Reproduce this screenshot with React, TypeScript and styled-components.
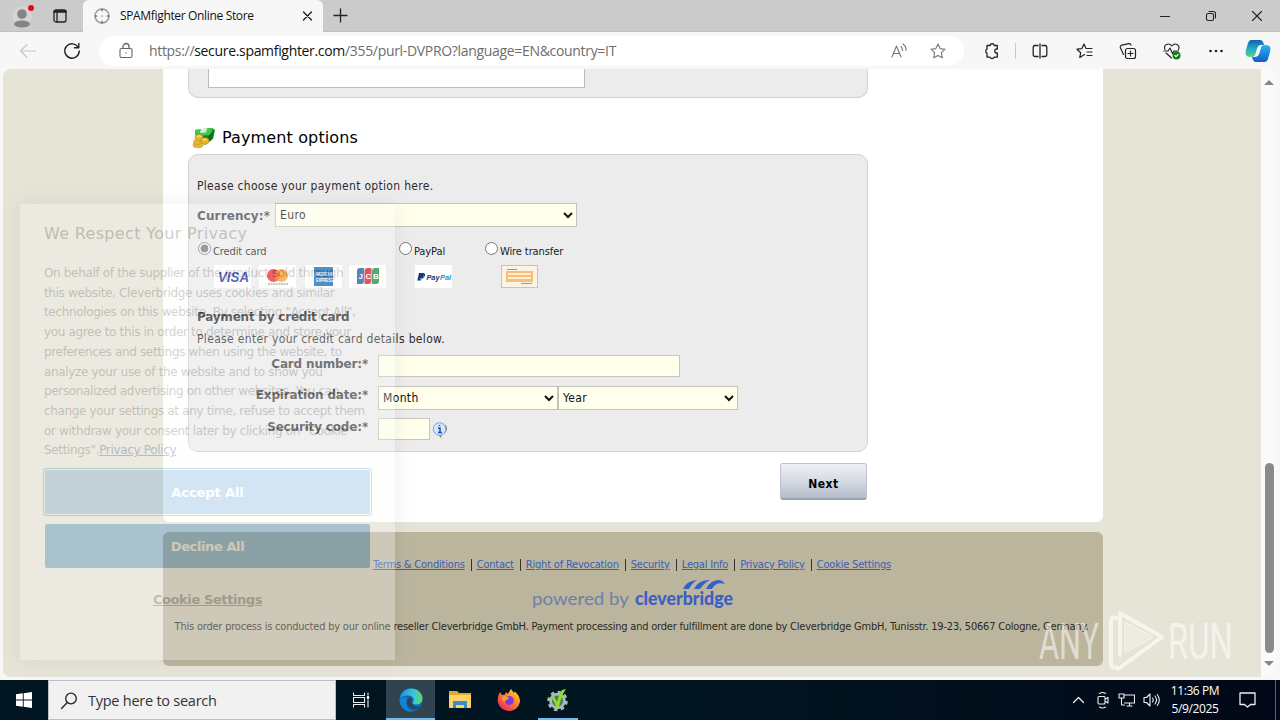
import React, { ReactNode } from 'react';
import styled, { createGlobalStyle } from 'styled-components';

const tahoma = '"DejaVu Sans Condensed", "DejaVu Sans", sans-serif';
const verdana = '"DejaVu Sans", sans-serif';
const segoe = '"Open Sans", "Noto Sans", sans-serif';

const GlobalStyle = createGlobalStyle`
    * {
        box-sizing: border-box;
    }
    body {
        margin: 0;
        overflow: hidden;
        font-family: ${tahoma};
    }
`;

const Screen = styled.div`
    position: relative;
    width: 1280px;
    height: 720px;
    display: flex;
    flex-direction: column;
    overflow: hidden;
    background-color: #f7f7f7;
`;

/* browser window */

const TabStrip = styled.div`
    height: 32px;
    flex: none;
    display: flex;
    align-items: center;
    background-color: #cbcbcb;
    border-bottom: 1px solid #c0c0c0;
`;

const TabTools = styled.div`
    width: 83px;
    height: 32px;
    padding-left: 12px;
    display: flex;
    align-items: center;
    gap: 19px;
`;

const Tab = styled.div`
    width: 240px;
    height: 33px;
    margin-top: 1px;
    padding: 0 10px 0 11px;
    display: flex;
    align-items: center;
    background-color: #f7f7f7;
    border-radius: 6px 6px 0 0;
`;

const TabTitle = styled.span`
    flex: 1;
    margin-left: 10px;
    font: 12px/20px ${segoe};
    letter-spacing: -0.34px;
    color: #111;
    white-space: nowrap;
`;

const NewTab = styled.div`
    margin-left: 10px;
    display: flex;
`;

const WindowButtons = styled.div`
    margin-left: auto;
    padding-right: 17px;
    display: flex;
    gap: 34px;
`;

const ToolBar = styled.div`
    height: 37px;
    flex: none;
    display: flex;
    align-items: center;
    padding-left: 19px;
`;

const AddressBar = styled.div`
    width: 865px;
    height: 30px;
    margin-left: 18px;
    padding: 0 18px 0 18px;
    display: flex;
    align-items: center;
    background-color: #fff;
    border-radius: 15px;
`;

const Url = styled.span`
    flex: 1;
    margin-left: 14px;
    font: 14px/20px ${segoe};
    letter-spacing: -0.32px;
    color: #6d6d6d;
    white-space: nowrap;

    b {
        font-weight: 400;
        color: #111;
    }
`;

const ToolIcons = styled.div`
    margin-left: 6px;
    display: flex;
    align-items: center;
`;

const ToolButton = styled.span`
    width: 44px;
    display: flex;
    justify-content: center;
`;

const Separator = styled.span`
    width: 1px;
    height: 16px;
    margin: 0 2px 0 1px;
    background-color: #c8c8c8;
`;

/* page */

const Viewport = styled.div`
    width: 1274px;
    height: 608px;
    flex: none;
    margin: 0 3px 3px;
    display: flex;
    overflow: hidden;
    border-radius: 8px;
    background-color: #e6e4d6;
`;

const PageBody = styled.div`
    flex: 1;
    padding-left: 160px;
`;

const ScrollBar = styled.div`
    width: 16px;
    padding: 10px 0 10px;
    display: flex;
    flex-direction: column;
    align-items: center;
    background-color: #fafafa;
`;

const Thumb = styled.div`
    width: 9px;
    height: 190px;
    margin: auto 0 8px;
    border-radius: 5px;
    background-color: #8a8a8a;
`;

const Sheet = styled.div`
    width: 940px;
    height: 453px;
    padding: 0 235px 0 25px;
    background-color: #fff;
    border-radius: 0 0 6px 6px;
`;

const Panel = styled.div`
    width: 680px;
    background-color: #ececec;
    border: 1px solid #d2d2d2;
    border-radius: 10px;
`;

const PanelTail = styled(Panel)`
    height: 29px;
    padding-left: 19px;
    border-top: 0;
    border-radius: 0 0 10px 10px;
`;

const TailInput = styled.div`
    width: 377px;
    height: 19px;
    background-color: #fff;
    border: 1px solid #bcbcbc;
    border-top: 0;
`;

const SectionTitle = styled.h2`
    height: 24px;
    margin: 28px 0 4px;
    padding-left: 4px;
    display: flex;
    align-items: center;
    gap: 5px;
    font: 16px/24px ${verdana};
    letter-spacing: 0.13px;
    color: #000;
`;

const PaymentPanel = styled(Panel)`
    height: 298px;
    padding: 20px 0 0 8px;
`;

const Text = styled.p<{ $top?: number; $spacing?: number }>`
    height: 20px;
    margin: ${({ $top }) => $top || 0}px 0 0;
    padding-top: 1px;
    font: 12px/20px ${tahoma};
    letter-spacing: ${({ $spacing }) => $spacing || 0}px;
    color: #2c2c2c;
    white-space: nowrap;
`;

const Subtitle = styled(Text)`
    font: 700 12px/20px ${verdana};
    letter-spacing: -0.22px;
`;

const Row = styled.div<{ $top: number; $height: number }>`
    height: ${({ $height }) => $height}px;
    margin-top: ${({ $top }) => $top}px;
    display: flex;
    align-items: center;
`;

const Label = styled.label`
    width: 78px;
    padding-top: 1px;
    font: 700 12px/16px ${verdana};
    letter-spacing: 0.12px;
    color: #444;
    white-space: nowrap;
`;

const FieldLabel = styled(Label)`
    width: 171px;
    align-self: flex-start;
    margin-right: 10px;
    letter-spacing: -0.17px;
    text-align: right;
`;

const Select = styled.select<{ $width: number }>`
    width: ${({ $width }) => $width}px;
    height: 24px;
    padding: 0 0 0 -1px;
    font: 12px ${tahoma};
    letter-spacing: 0.36px;
    color: #111;
    background-color: #ffffec;
    border: 1px solid #c3c3ba;
    border-radius: 0;
`;

const Input = styled.input<{ $width: number }>`
    width: ${({ $width }) => $width}px;
    height: 22px;
    background-color: #ffffec;
    border: 1px solid #c6c6bd;
`;

const Option = styled.label<{ $width: number }>`
    width: ${({ $width }) => $width}px;
    display: flex;
    align-items: center;
    gap: 2px;
    font: 11px/20px ${tahoma};
    letter-spacing: -0.1px;
    color: #222;
    white-space: nowrap;

    input {
        width: 13px;
        height: 13px;
        margin: 0 0 1px 1px;
        accent-color: #767676;
    }

    span {
        padding-top: 5px;
    }
`;

const Badge = styled.div<{ $left: number }>`
    width: 37px;
    height: 23px;
    margin-left: ${({ $left }) => $left}px;
    display: flex;
    background-color: #fff;
`;

const NextButton = styled.button`
    display: block;
    width: 87px;
    height: 37px;
    margin: 11px 0 0 592px;
    padding: 5px 0 0;
    font: 700 12px ${tahoma};
    letter-spacing: 0.5px;
    color: #000;
    border: 1px solid #bcc3cd;
    border-bottom: 2px solid #9ba2ae;
    border-radius: 3px;
    background: linear-gradient(#f0f1f5, #d5d9e2 50%, #b5bdca);
`;

const Footer = styled.div`
    width: 940px;
    height: 134px;
    margin-top: 10px;
    padding-top: 25px;
    display: flex;
    flex-direction: column;
    align-items: center;
    background-color: #bbb59e;
    border-radius: 6px;
`;

const FooterLinks = styled.div`
    height: 16px;
    padding-right: 2px;
    display: flex;
    align-items: center;
    font: 11px/16px ${tahoma};
    letter-spacing: -0.2px;
    white-space: nowrap;

    a {
        color: #3a5db5;
        text-decoration: underline;
    }

    a + a {
        margin-left: 6px;
        padding-left: 5px;
        border-left: 1px solid #333;
        line-height: 12px;
    }
`;

const FooterNote = styled.div`
    margin-top: 8px;
    padding-right: 3px;
    font: 11px/16px ${tahoma};
    letter-spacing: -0.207px;
    color: #2b2922;
    white-space: nowrap;
`;

/* consent dialog, caught half way through its fade */

const Consent = styled.div`
    position: absolute;
    left: 20px;
    top: 204px;
    width: 375px;
    height: 456px;
    padding: 18px 24px;
    display: flex;
    flex-direction: column;
    align-items: flex-start;
    background-color: #fdfcfb;
    box-shadow: 0 0 16px rgba(0, 0, 0, 0.22);
    opacity: 0.27;
`;

const ConsentTitle = styled.div`
    font: 16px/24px ${verdana};
    letter-spacing: 0.33px;
    color: #505050;
    white-space: nowrap;
`;

const ConsentText = styled.p`
    margin: 18px 0 0;
    font: 12px/19.7px ${verdana};
    letter-spacing: -0.34px;
    color: #606060;
    white-space: nowrap;

    a {
        color: #22479d;
        text-decoration: underline;
    }
`;

const ConsentButton = styled.div<{ $accept?: boolean }>`
    width: 325px;
    height: 44px;
    margin: ${({ $accept }) => ($accept ? '9px' : '10px')} 0 0 1px;
    display: flex;
    align-items: center;
    justify-content: center;
    font: 700 13px ${verdana};
    letter-spacing: ${({ $accept }) => ($accept ? '-0.1px' : '-0.4px')};
    color: #fff;
    border-radius: 2px;
    background-color: ${({ $accept }) => ($accept ? '#5fa0d6' : '#0a6cbb')};
    box-shadow: ${({ $accept }) => ($accept ? '0 0 0 1px #fff, 0 0 0 2px #4585b5' : 'none')};
`;

const ConsentLink = styled.a`
    align-self: center;
    margin-top: 22px;
    font: 700 13px/20px ${verdana};
    letter-spacing: -0.4px;
    color: #555;
    text-decoration: underline;
`;

const Watermark = styled.svg`
    position: absolute;
    left: 1034px;
    top: 606px;
`;

/* taskbar */

const TaskBar = styled.div`
    height: 40px;
    flex: none;
    display: flex;
    align-items: center;
    background: linear-gradient(90deg, #011620, #011520 55%, #020817);
`;

const Tile = styled.div<{ $width?: number; $active?: boolean; $running?: boolean }>`
    width: ${({ $width }) => $width || 49}px;
    height: 40px;
    display: flex;
    align-items: center;
    justify-content: center;
    background-color: ${({ $active }) => ($active ? '#30434e' : 'transparent')};
    box-shadow: ${({ $active, $running }) => ($active || $running ? 'inset 0 -2px #76b9ed' : 'none')};
`;

const RunningTile = styled(Tile)`
    margin-left: 5px;
`;

const SearchBox = styled.div`
    width: 288px;
    height: 40px;
    padding: 1px 0 0 11px;
    display: flex;
    align-items: center;
    gap: 11px;
    background-color: #f1f1f1;
    border: 1px solid #bdbdc6;
    font: 14.5px/20px ${segoe};
    letter-spacing: -0.25px;
    color: #333;
`;

const Tray = styled.div`
    margin-left: auto;
    display: flex;
    align-items: center;
    gap: 8px;
`;

const Clock = styled.div`
    width: 60px;
    margin: 0 6px 0 -3px;
    padding-bottom: 1px;
    font: 12px/18px ${segoe};
    letter-spacing: -0.4px;
    color: #fff;
    text-align: center;
    white-space: nowrap;
`;

const DesktopEdge = styled.div`
    width: 5px;
    height: 40px;
    margin-left: 11px;
    border-left: 1px solid #5a6070;
`;

function Icon({ w, h, color = '#222', children }: {
    w: number,
    h: number,
    color?: string,
    children: ReactNode
}) {
  return (
    <svg width={w} height={h} viewBox={`0 0 ${w} ${h}`} fill="none" stroke={color} strokeWidth="1.1" strokeLinecap="round" strokeLinejoin="round">
      {children}
    </svg>
  );
}

const Reload = styled.span`
    display: flex;
    margin-left: 26px;
`;

const Favorite = styled.span`
    display: flex;
    margin-left: 22px;
`;

const STAR = 'M8 1 10.1 5.6 15 6.2 11.4 9.7 12.3 14.8 8 12.4 3.7 14.8 4.6 9.7 1 6.2 5.9 5.6z';

function Tabs() {
  return (
    <TabStrip>
      <TabTools>
        <Icon w={22} h={26}>
          <circle cx="10" cy="13" r="10" fill="#d6d3d2" stroke="none" />
          <circle cx="10" cy="11" r="4.8" fill="#858383" stroke="none" />
          <path d="M2 21.500c0-5.500 16-5.500 16 0-2 4-14 4-16 0z" fill="#858383" stroke="none" />
          <circle cx="19" cy="5" r="3" fill="#e00b1c" stroke="none" />
        </Icon>
        <Icon w={14} h={14}>
          <rect x="1" y="1" width="12" height="12" rx="2" strokeWidth="1.3" />
          <path d="M1.500 2.500h11" strokeWidth="2.500" />
          <path d="M4 3v10" strokeWidth="1.300" />
        </Icon>
      </TabTools>
      <Tab>
        <Icon w={16} h={16} color="#999">
          <circle cx="8" cy="8" r="7" strokeWidth="1.5" />
          <path d="M8 1v2M8 13v2M1 8h2M13 8h2M7.800 8h.4" stroke="#555" />
        </Icon>
        <TabTitle>SPAMfighter Online Store</TabTitle>
        <Icon w={11} h={10}><path d="M1.5 1l8 8M9.500 1l-8 8" strokeWidth="1.4" /></Icon>
      </Tab>
      <NewTab>
        <Icon w={15} h={15}><path d="M7.500 1v13M1 7.500h13" strokeWidth="1.300" /></Icon>
      </NewTab>
      <WindowButtons>
        <Icon w={12} h={12}><path d="M1.500 6.500h9" /></Icon>
        <Icon w={12} h={12}>
          <rect x="1.500" y="3.500" width="7" height="7" rx="1.500" />
          <path d="M4 1.500h4.500a2 2 0 0 1 2 2V8" />
        </Icon>
        <Icon w={12} h={12}><path d="M1.500 1.500l9 9M10.500 1.500l-9 9" /></Icon>
      </WindowButtons>
    </TabStrip>
  );
}

function Navigation() {
  return (
    <ToolBar>
      <Icon w={18} h={16} color="#c6c6c6"><path d="M16.500 8H1.500M8 1.500 1.500 8 8 14.500" /></Icon>
      <Reload>
        <Icon w={18} h={18}><path d="M15.300 5.500A7.200 7.200 0 1 0 16.200 9M15.800 1.500v4.300h-4.300" strokeWidth="1.400" /></Icon>
      </Reload>
      <AddressBar>
        <Icon w={18} h={18} color="#666">
          <rect x="3" y="6.500" width="12" height="9" rx="1.500" />
          <path d="M6 6.500V4.500a3 3 0 0 1 6 0v2M9 11v.1" strokeWidth="1.300" />
        </Icon>
        <Url>https://<b>secure.spamfighter.com</b>/355/purl-DVPRO?language=EN&amp;country=IT</Url>
        <Icon w={18} h={16} color="#777">
          <path d="M2 14 6.500 3 11 14M3.600 10.500h5.800M11 3.500q1.500 1.500 1.500 4M13 1q3.500 2.500 3 6.500" />
        </Icon>
        <Favorite><Icon w={16} h={16} color="#777"><path d={STAR} /></Icon></Favorite>
      </AddressBar>
      <ToolIcons>
        <ToolButton>
          <Icon w={18} h={18}>
            <path d="M4 3.500h3a2.200 2.200 0 0 1 4.300 0h3v3.600a2 2 0 1 0 0 3.800v4.300h-3.200a2.200 2.200 0 0 1-4 0H4v-4a2.200 2.200 0 0 1 0-4z" strokeWidth="1.300" />
          </Icon>
        </ToolButton>
        <Separator />
        <ToolButton>
          <Icon w={16} h={16}>
            <path d="M6 2.500H3A1.800 1.800 0 0 0 1.200 4.300v7.400A1.800 1.800 0 0 0 3 13.500h3M10 2.500h3a1.800 1.800 0 0 1 1.800 1.800v7.400a1.800 1.800 0 0 1-1.800 1.800h-3M8 1v14" strokeWidth="1.300" />
          </Icon>
        </ToolButton>
        <ToolButton>
          <Icon w={17} h={16}>
            <path d="M8.500 11.500 3.800 14.500 4.700 9.700 1 6.200 5.900 5.600 8 1 10 5.500M11 5.500h5M11 9h5M11 12.500h5" strokeWidth="1.200" />
          </Icon>
        </ToolButton>
        <ToolButton>
          <Icon w={18} h={18}>
            <rect x="6.500" y="6.500" width="10" height="10" rx="2" strokeWidth="1.200" />
            <path d="M11.500 9v5M9 11.500h5M4.500 12.500 1.300 5.500a2 2 0 0 1 1.500-2.400l7-1.500a2 2 0 0 1 2.200 1.500" strokeWidth="1.200" />
          </Icon>
        </ToolButton>
        <ToolButton>
          <Icon w={18} h={18}>
            <path d="M2 7.500C0 3 5.500 0 8.800 4c3.200-4 8.700-1 6.700 3.500M1 9h4l2-3 2.500 5.500L11 9h4.500M3 11l5.500 5" />
            <circle cx="13.500" cy="13.500" r="4" fill="#167c19" stroke="none" />
            <path d="M11.800 13.500l1.200 1.200 2.200-2.200" stroke="#fff" />
          </Icon>
        </ToolButton>
        <ToolButton>
          <Icon w={16} h={4}>
            <g fill="#222" stroke="none"><circle cx="2.500" cy="2" r="1.300" /><circle cx="8" cy="2" r="1.300" /><circle cx="13.500" cy="2" r="1.300" /></g>
          </Icon>
        </ToolButton>
        <svg width="40" height="24" viewBox="-7 0 40 24">
          <defs>
            <linearGradient id="copilotA" x1="0" y1="0" x2="0" y2="1">
              <stop offset="0" stopColor="#1460ae" />
              <stop offset=".5" stopColor="#20a9c7" />
              <stop offset="1" stopColor="#5cd28a" />
            </linearGradient>
            <linearGradient id="copilotB" x1="0" y1="0" x2="0" y2="1">
              <stop offset="0" stopColor="#27b8ee" />
              <stop offset="1" stopColor="#1559d2" />
            </linearGradient>
          </defs>
          <path d="M6 1h9q3 0 4 5h-3q-3 0-4 4l-2 6q-1 2-3 2H5q-6 0-4-7l2-7q1-3 3-3z" fill="url(#copilotA)" />
          <path d="M20 23h-9q-3 0-4-5h3q3 0 4-4l2-6q1-2 3-2h2q6 0 4 7l-2 7q-1 3-3 3z" fill="url(#copilotB)" />
          <path d="M10.500 17l2-7q1-3.500 4-3.500l-2 7q-1 3.500-4 3.500z" fill="#fff" />
        </svg>
      </ToolIcons>
    </ToolBar>
  );
}

function MoneyIcon() {
  return (
    <svg width="25" height="22" viewBox="0 0 25 22">
      <path d="M3 3 20 1l3 2-2 9-8 6-9-6z" fill="#168b2b" />
      <path d="M3 3 21 1l-3 7-13 1z" fill="#3dc94c" />
      <path d="M9 2l6-.5-1 4-6 .5z" fill="#d7f0d5" />
      <path d="M17 8l5-4-2 8-6 5z" fill="#0f6e22" />
      <g fill="#e8b52c" stroke="#b98a1c" strokeWidth=".5">
        <ellipse cx="6" cy="18" rx="5" ry="2.800" />
        <ellipse cx="5.500" cy="15" rx="4" ry="2.500" />
        <ellipse cx="7" cy="10.500" rx="4" ry="3" />
        <ellipse cx="13" cy="14" rx="4" ry="3.200" />
      </g>
      <path d="M5 9.500q2-1.500 4 0M10.500 13q2-1.500 4 0" stroke="#fff1a0" fill="none" />
    </svg>
  );
}

function CardLogos() {
  return (
    <Row $top={6} $height={23}>
      <Badge $left={17}>
        <svg width="37" height="23">
          <text x="4" y="17" fontFamily="Liberation Sans" fontSize="14" fontWeight="700" fontStyle="italic" fill="#2330a8" textLength="31" lengthAdjust="spacingAndGlyphs">VISA</text>
        </svg>
      </Badge>
      <Badge $left={8}>
        <svg width="37" height="23">
          <circle cx="14.500" cy="10.500" r="6.500" fill="#ea2a2e" />
          <circle cx="22.500" cy="10.500" r="6.500" fill="#f59e2c" />
          <path d="M18.500 5.400a6.500 6.500 0 0 1 0 10.200 6.500 6.500 0 0 1 0-10.200z" fill="#f26522" />
          <path d="M9 19h20" stroke="#666" strokeDasharray="2 .6" />
        </svg>
      </Badge>
      <Badge $left={9}>
        <svg width="37" height="23">
          <rect x="9" y="2" width="19" height="19" fill="#0d66b4" />
          <g fontFamily="Liberation Sans" fontSize="5" fontWeight="700" fill="#fff">
            <text x="10" y="11" textLength="17" lengthAdjust="spacingAndGlyphs">AMERICAN</text>
            <text x="11" y="17" textLength="17" lengthAdjust="spacingAndGlyphs">EXPRESS</text>
          </g>
        </svg>
      </Badge>
      <Badge $left={7}>
        <svg width="37" height="23">
          <path d="M11 3h4v13q0 3-3 3H8V6q0-3 3-3z" fill="#1858a5" />
          <path d="M18.500 3h4v13q0 3-3 3h-4V6q0-3 3-3z" fill="#d0182e" />
          <path d="M26 3h4v13q0 3-3 3h-4V6q0-3 3-3z" fill="#158c3a" />
          <g fontFamily="Liberation Sans" fontSize="8" fontWeight="700" fill="#fff">
            <text x="9.500" y="14">J</text><text x="16.500" y="14">C</text><text x="24" y="14">B</text>
          </g>
        </svg>
      </Badge>
      <Badge $left={29}>
        <svg width="37" height="23">
          <path d="M4 8h4q2.500 0 2 2.500T7 13H5.500L5 15.500H2.300z" fill="#1b3475" />
          <path d="M8.500 10q.7 4-3 4l-.5 2" stroke="#1a86c9" fill="none" />
          <g fontFamily="Liberation Sans" fontSize="8" fontWeight="700" fontStyle="italic">
            <text x="11.500" y="15" fill="#1b2f6b" textLength="13" lengthAdjust="spacingAndGlyphs">Pay</text>
            <text x="25" y="15" fill="#1b94d2" textLength="11" lengthAdjust="spacingAndGlyphs">Pal</text>
          </g>
        </svg>
      </Badge>
      <Badge $left={49}>
        <svg width="37" height="23">
          <rect x=".5" y=".5" width="36" height="22" fill="#fbf3e6" stroke="#c9c4b8" />
          <path d="M6 4.500h10M20 18.500h11" stroke="#bd8f83" />
          <path d="M5 6h27v11H5z" fill="#f8bd78" />
          <path d="M7 8h23v2H7zM7 12h23v2H7z" fill="#fff0d8" />
        </svg>
      </Badge>
    </Row>
  );
}

function PaymentForm() {
  return (
    <PaymentPanel>
      <Text $spacing={0.3}>Please choose your payment option here.</Text>
      <Row $top={8} $height={24}>
        <Label>Currency:*</Label>
        <Select $width={302}><option>Euro</option></Select>
      </Row>
      <Row $top={12} $height={20}>
        <Option $width={201}><input type="radio" name="payment" defaultChecked /><span>Credit card</span></Option>
        <Option $width={86}><input type="radio" name="payment" /><span>PayPal</span></Option>
        <Option $width={90}><input type="radio" name="payment" /><span>Wire transfer</span></Option>
      </Row>
      <CardLogos />
      <Subtitle $top={18}>Payment by credit card</Subtitle>
      <Text $top={2} $spacing={0.33}>Please enter your credit card details below.</Text>
      <Row $top={7} $height={22}>
        <FieldLabel>Card number:*</FieldLabel>
        <Input $width={302} />
      </Row>
      <Row $top={9} $height={24}>
        <FieldLabel>Expiration date:*</FieldLabel>
        <Select $width={180}><option>Month</option></Select>
        <Select $width={180}><option>Year</option></Select>
      </Row>
      <Row $top={8} $height={22}>
        <FieldLabel>Security code:*</FieldLabel>
        <Input $width={52} />
        <svg width="19" height="18" viewBox="-1 -1 19 18">
          <path d="M14 3.500q4 4 0 8.500l-3 1-1 4-3-3.500" fill="#77798a" />
          <circle cx="8.500" cy="8" r="6.300" fill="#d3e6fb" stroke="#8ba3c9" />
          <path d="M7 7h2v4.500M7 11.500h4M8.500 4v1" stroke="#1d4fb0" strokeWidth="1.500" fill="none" />
        </svg>
      </Row>
    </PaymentPanel>
  );
}

const links = ['Terms & Conditions', 'Contact', 'Right of Revocation', 'Security', 'Legal Info', 'Privacy Policy', 'Cookie Settings'];

function PageFooter() {
  return (
    <Footer>
      <FooterLinks>
        {links.map((link) => <a key={link}>{link}</a>)}
      </FooterLinks>
      <svg width="204" height="38" viewBox="0 0 204 38" fontFamily="Lato">
        <text x="1" y="32" fontSize="18" fontWeight="400" fill="#6e7fa9" textLength="97" lengthAdjust="spacingAndGlyphs">powered by</text>
        <text x="104" y="32" fontSize="18" fontWeight="900" fill="#3c5fc2" textLength="98" lengthAdjust="spacingAndGlyphs">cleverbridge</text>
        <g fill="#3860cc">
          <path d="M152 16q3-8 14-9-5 3-8 9z" />
          <path d="M163 16q4-9 16-9-6 3-10 9z" />
          <path d="M175 16q4-9 14-9 3 1 5 4-9-3-13 5z" />
        </g>
      </svg>
      <FooterNote>
        This order process is conducted by our online reseller Cleverbridge GmbH. Payment processing and order fulfillment are done by Cleverbridge GmbH, Tunisstr. 19-23, 50667 Cologne, Germany.
      </FooterNote>
    </Footer>
  );
}

function Page() {
  return (
    <Viewport>
      <PageBody>
        <Sheet>
          <PanelTail><TailInput /></PanelTail>
          <SectionTitle><MoneyIcon />Payment options</SectionTitle>
          <PaymentForm />
          <NextButton>Next</NextButton>
        </Sheet>
        <PageFooter />
      </PageBody>
      <ScrollBar>
        <svg width="10" height="7"><path d="M0 6 5 1l5 5z" fill="#858585" /></svg>
        <Thumb />
        <svg width="10" height="6"><path d="M0 0 5 5l5-5z" fill="#858585" /></svg>
      </ScrollBar>
    </Viewport>
  );
}

function ConsentDialog() {
  return (
    <Consent>
      <ConsentTitle>We Respect Your Privacy</ConsentTitle>
      <ConsentText>
        On behalf of the supplier of the product sold through<br />
        this website, Cleverbridge uses cookies and similar<br />
        technologies on this website. By selecting &quot;Accept All&quot;,<br />
        you agree to this in order to determine and store your<br />
        preferences and settings when using the website, to<br />
        analyze your use of the website and to show you<br />
        personalized advertising on other websites. You can<br />
        change your settings at any time, refuse to accept them<br />
        or withdraw your consent later by clicking on &quot;Cookie<br />
        Settings&quot;.<a>Privacy Policy</a>
      </ConsentText>
      <ConsentButton $accept>Accept All</ConsentButton>
      <ConsentButton>Decline All</ConsentButton>
      <ConsentLink>Cookie Settings</ConsentLink>
    </Consent>
  );
}

function AnyRun() {
  return (
    <Watermark width="220" height="72" viewBox="0 0 220 72">
      <g fontFamily="Roboto" fontSize="50" fill="#fff" fillOpacity=".55">
        <text x="5" y="53" textLength="60" lengthAdjust="spacingAndGlyphs">ANY</text>
        <text x="134" y="53" textLength="65" lengthAdjust="spacingAndGlyphs">RUN</text>
      </g>
      <g fill="none" stroke="#fff" strokeOpacity=".6" strokeWidth="4" strokeLinejoin="round" strokeLinecap="round">
        <path d="M82 12q-5-2-5 4v42q0 5 5 3" />
        <path d="M86 49V7l42 24-44 32" />
        <path d="M91 46V16l28 15z" fill="#fff" fillOpacity=".25" strokeWidth="1" />
      </g>
    </Watermark>
  );
}

function EdgeLogo() {
  return (
    <svg width="24" height="24" viewBox="0 0 24 24">
      <defs>
        <linearGradient id="edgeTop" x1="0" y1="0" x2="1" y2="0">
          <stop offset="0" stopColor="#1b8fe0" />
          <stop offset=".6" stopColor="#35c6dc" />
          <stop offset="1" stopColor="#5fdc62" />
        </linearGradient>
      </defs>
      <circle cx="12" cy="12" r="11.500" fill="#0f68bd" />
      <path d="M.7 10.500C2 4 6.500.5 12 .5c7 0 11.500 5 11.500 10 0 4-3 6-6.500 6-2 0-4-1-3-2.500 2-3-.5-6.500-5-6.500-4 0-7 1.500-8.300 3z" fill="url(#edgeTop)" />
      <path d="M9 10.500c-3 4 0 10 6 10.500 3 0 5-1 6.500-2.300-3 .8-8 0-9-4.200-.5-1.500 0-3 .8-3.500-1-1.500-3-1.500-4.300-.5z" fill="#30434e" />
      <path d="M8.500 10.500c-3 5-1 11 5.500 12.800-4 1-13-1-13.500-11.300 2-3 6-3.500 8-1.500z" fill="#1483d6" />
    </svg>
  );
}

function Task() {
  return (
    <TaskBar>
      <Tile $width={48}>
        <svg width="16" height="16">
          <path d="M0 2.300 6.800 1.300V7.500H0zM7.700 1.200 16 0v7.500H7.700zM0 8.400h6.800v6.300L0 13.700zM7.700 8.400H16V16l-8.300-1.200z" fill="#fff" />
        </svg>
      </Tile>
      <SearchBox>
        <Icon w={17} h={18}><circle cx="11" cy="6.500" r="5.300" strokeWidth="1.300" /><path d="M7.300 10.500 1.500 16.500" strokeWidth="1.300" /></Icon>
        Type here to search
      </SearchBox>
      <Tile $width={50}>
        <Icon w={17} h={16} color="#eee">
          <path d="M.5 1v2.500h11V1M.5 15v-2.500h11V15M.5 5.500h11v5H.5zM15 1v2M15 8v7" />
          <path d="M15 5v1" strokeWidth="2.500" />
        </Icon>
      </Tile>
      <Tile $width={49} $active><EdgeLogo /></Tile>
      <Tile>
        <svg width="22" height="20" viewBox="0 0 22 20">
          <path d="M0 1h8l2 2h12v15H0z" fill="#e9a72b" />
          <path d="M0 5h22v13H0z" fill="#fdd368" />
          <path d="M4 18v-6q0-1 1-1h12q1 0 1 1v6h-3v-3H7v3z" fill="#3a8bd0" />
        </svg>
      </Tile>
      <Tile>
        <svg width="24" height="24" viewBox="0 0 24 24">
          <defs>
            <linearGradient id="fox" x1="1" y1="0" x2="0.200" y2="1">
              <stop offset="0" stopColor="#ffe642" />
              <stop offset=".45" stopColor="#ff8a26" />
              <stop offset="1" stopColor="#ee1f62" />
            </linearGradient>
          </defs>
          <path d="M3 4l2 3 3-.5L9 4l2 2q2-4 3-5l3 4q1-1 0-2 6 4 6 11A11.300 11.300 0 0 1 .700 13Q.500 8 3 4z" fill="url(#fox)" />
          <circle cx="12.300" cy="12.500" r="4.500" fill="#7a3be0" />
          <path d="M5 9q4-2 7 1l-2 2q-3 0-2 3-3-2-3-6z" fill="#ff9a2a" />
        </svg>
      </Tile>
      <RunningTile $width={40} $running>
        <svg width="24" height="24" viewBox="0 0 24 24">
          <circle cx="11.500" cy="13" r="8.300" fill="#a9b8bb" stroke="#a9b8bb" strokeWidth="4" strokeDasharray="3.300 3.200" />
          <circle cx="11.500" cy="13" r="5.500" fill="#477f53" />
          <path d="M5 9l3-1 3 6q2-8 5-12l4-1q-5 7-7 18h-3q-1-5-5-10z" fill="#8ddb2c" />
        </svg>
      </RunningTile>
      <Tray>
        <Icon w={17} h={8} color="#eee"><path d="M1.500 6.500l5-5 5 5" strokeWidth="1.300" /></Icon>
        <Icon w={13} h={18} color="#eee">
          <rect x="1" y="5.500" width="7" height="7.500" rx="1" />
          <path d="M8.500 8l2.500-1.500v5.500L8.500 10.500M2.500 2.500q3-2 6 0M2.500 16q3 2 6 0" />
        </Icon>
        <Icon w={17} h={16} color="#eee"><path d="M6.500 3h10v8h-10M1 2h5v4H1zM3.500 6v7h3M9 14h5M11.500 11v3" /></Icon>
        <Icon w={17} h={16} color="#eee">
          <path d="M1 5.500h2.500L7 2v12l-3.500-3.500H1zM9.500 6q1.500 2 0 4M12 4q3 4 0 8M14.300 2.500q4 5.500 0 11" />
        </Icon>
        <Clock>11:36 PM<br />5/9/2025</Clock>
        <Icon w={17} h={16} color="#eee"><path d="M1 1h15v11.500h-4.500L8.500 15l-3-2.500H1z" strokeWidth="1.300" /></Icon>
        <DesktopEdge />
      </Tray>
    </TaskBar>
  );
}

function App() {
  return (
    <Screen>
      <GlobalStyle />
      <Tabs />
      <Navigation />
      <Page />
      <Task />
      <ConsentDialog />
      <AnyRun />
    </Screen>
  );
}

export default App;
